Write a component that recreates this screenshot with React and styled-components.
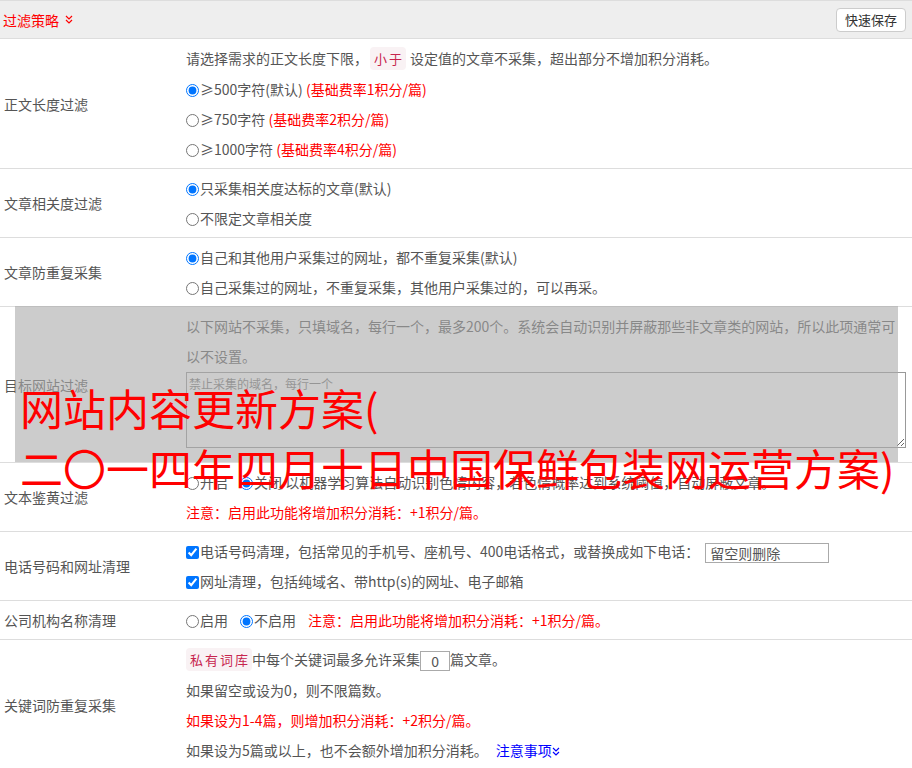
import React from "react";
import styled, { createGlobalStyle } from "styled-components";

const GlobalStyle = createGlobalStyle`
    body {
        margin: 0;
        background: #fff;
        font-family: "Noto Sans CJK SC", "Liberation Sans", sans-serif;
        font-size: 14px;
        color: #555;
    }
`;

const Page = styled.div`
    position: relative;
    width: 912px;
`;

const Header = styled.div`
    display: flex;
    align-items: center;
    justify-content: space-between;
    height: 37px;
    background: #eee;
    border-top: 1px solid #ddd;
    border-bottom: 1px solid #ddd;
    padding: 0 6px 0 3px;
`;

const Title = styled.div`
    display: flex;
    align-items: center;
    gap: 6px;
    color: #f00;
    font-size: 14px;
`;

const SaveButton = styled.button`
    height: 24px;
    padding: 0 8px;
    background: #fff;
    border: 1px solid #ccc;
    border-radius: 4px;
    font-family: inherit;
    font-size: 13px;
    color: #333;
`;

const Row = styled.div`
    display: grid;
    grid-template-columns: 182px 1fr;
    border-bottom: 1px solid #ddd;
`;

const Label = styled.div`
    display: flex;
    align-items: center;
    padding-left: 4px;
`;

const Content = styled.div`
    padding: 4px 6px 4px 4px;
`;

const Line = styled.div`
    line-height: 30px;
    white-space: ${(p) => (p.$wrap ? "normal" : "nowrap")};
`;

const Red = styled.span`
    color: #f00;
`;

const Code = styled.code`
    font-family: inherit;
    font-size: 13px;
    letter-spacing: 2px;
    padding: 2px 2px 2px 4px;
    margin: ${(p) => (p.$tight ? "0" : "0 4px 0 2px")};
    border-radius: 4px;
    background: #f9f2f4;
    color: #c7254e;
`;

const Option = styled.label`
    margin-right: ${(p) => (p.$gap ? "12px" : "0")};
    input {
        margin: 0 1px 0 0;
        width: 13px;
        height: 13px;
        vertical-align: -2px;
    }
`;

const Area = styled.textarea`
    display: block;
    box-sizing: border-box;
    width: 720px;
    height: 76px;
    margin: 1px 0 10px;
    padding: 2px;
    border: 1px solid #999;
    font-family: inherit;
    font-size: 12px;
    &::placeholder {
        color: #777;
    }
`;

const Field = styled.input`
    box-sizing: border-box;
    width: ${(p) => p.$w};
    height: 20px;
    margin-left: ${(p) => p.$ml || "0"};
    padding: 0 4px;
    border: 1px solid #aaa;
    font-family: inherit;
    font-size: 14px;
    color: #555;
    text-align: ${(p) => p.$align || "left"};
    vertical-align: middle;
    &::placeholder {
        color: #555;
    }
`;

const Link = styled.a`
    margin-left: 8px;
    color: #00f;
    text-decoration: none;
`;

const Shade = styled.div`
    position: absolute;
    top: 306px;
    left: 15px;
    width: 883px;
    height: 156px;
    background: rgba(170, 170, 170, 0.6);
`;

const Headline = styled.h1`
    position: absolute;
    top: 377px;
    left: 20px;
    margin: 0;
    font-size: 43px;
    font-weight: normal;
    line-height: 60px;
    color: #f00;
    white-space: nowrap;
`;

function Chevrons({ color }) {
    return (
        <svg width="8" height="9" viewBox="0 0 8 9" fill="none" stroke={color} strokeWidth="1.2">
            <polyline points="1,1 4,4 7,1" />
            <polyline points="1,5 4,8 7,5" />
        </svg>
    );
}

function Radio({ name, checked, gap, children }) {
    return (
        <Option $gap={gap}>
            <input type="radio" name={name} defaultChecked={checked} />
            {children}
        </Option>
    );
}

function Check({ children }) {
    return (
        <Option>
            <input type="checkbox" defaultChecked />
            {children}
        </Option>
    );
}

export default function App() {
    return (
        <Page>
            <GlobalStyle />
            <Header>
                <Title>
                    过滤策略
                    <Chevrons color="#f00" />
                </Title>
                <SaveButton>快速保存</SaveButton>
            </Header>

            <Row>
                <Label>正文长度过滤</Label>
                <Content>
                    <Line>
                        请选择需求的正文长度下限，<Code>小于</Code>设定值的文章不采集，超出部分不增加积分消耗。
                    </Line>
                    <Line>
                        <Radio name="len" checked>≥500字符(默认)</Radio> <Red>(基础费率1积分/篇)</Red>
                    </Line>
                    <Line>
                        <Radio name="len">≥750字符</Radio> <Red>(基础费率2积分/篇)</Red>
                    </Line>
                    <Line>
                        <Radio name="len">≥1000字符</Radio> <Red>(基础费率4积分/篇)</Red>
                    </Line>
                </Content>
            </Row>

            <Row>
                <Label>文章相关度过滤</Label>
                <Content>
                    <Line><Radio name="rel" checked>只采集相关度达标的文章(默认)</Radio></Line>
                    <Line><Radio name="rel">不限定文章相关度</Radio></Line>
                </Content>
            </Row>

            <Row>
                <Label>文章防重复采集</Label>
                <Content>
                    <Line><Radio name="dup" checked>自己和其他用户采集过的网址，都不重复采集(默认)</Radio></Line>
                    <Line><Radio name="dup">自己采集过的网址，不重复采集，其他用户采集过的，可以再采。</Radio></Line>
                </Content>
            </Row>

            <Row>
                <Label>目标网站过滤</Label>
                <Content>
                    <Line $wrap>
                        以下网站不采集，只填域名，每行一个，最多200个。系统会自动识别并屏蔽那些非文章类的网站，所以此项通常可以不设置。
                    </Line>
                    <Area placeholder="禁止采集的域名，每行一个" />
                </Content>
            </Row>

            <Row>
                <Label>文本鉴黄过滤</Label>
                <Content>
                    <Line>
                        <Radio name="porn" gap>开启</Radio>
                        <Radio name="porn" checked>关闭</Radio> 以机器学习算法自动识别色情内容，若色情概率达到系统阈值，自动屏蔽文章。
                    </Line>
                    <Line><Red>注意：启用此功能将增加积分消耗：+1积分/篇。</Red></Line>
                </Content>
            </Row>

            <Row>
                <Label>电话号码和网址清理</Label>
                <Content>
                    <Line>
                        <Check>电话号码清理，包括常见的手机号、座机号、400电话格式，或替换成如下电话：</Check>
                        <Field $w="124px" $ml="6px" placeholder="留空则删除" />
                    </Line>
                    <Line><Check>网址清理，包括纯域名、带http(s)的网址、电子邮箱</Check></Line>
                </Content>
            </Row>

            <Row>
                <Label>公司机构名称清理</Label>
                <Content>
                    <Line>
                        <Radio name="org" gap>启用</Radio>
                        <Radio name="org" checked gap>不启用</Radio>
                        <Red>注意：启用此功能将增加积分消耗：+1积分/篇。</Red>
                    </Line>
                </Content>
            </Row>

            <Row>
                <Label>关键词防重复采集</Label>
                <Content>
                    <Line>
                        <Code $tight>私有词库</Code>中每个关键词最多允许采集<Field $w="30px" $align="center" defaultValue="0" />篇文章。
                    </Line>
                    <Line>如果留空或设为0，则不限篇数。</Line>
                    <Line><Red>如果设为1-4篇，则增加积分消耗：+2积分/篇。</Red></Line>
                    <Line>
                        如果设为5篇或以上，也不会额外增加积分消耗。
                        <Link href="#">注意事项<Chevrons color="#00f" /></Link>
                    </Line>
                </Content>
            </Row>

            <Shade />
            <Headline>
                网站内容更新方案(
                <br />
                二〇一四年四月十日中国保鲜包装网运营方案)
            </Headline>
        </Page>
    );
}
